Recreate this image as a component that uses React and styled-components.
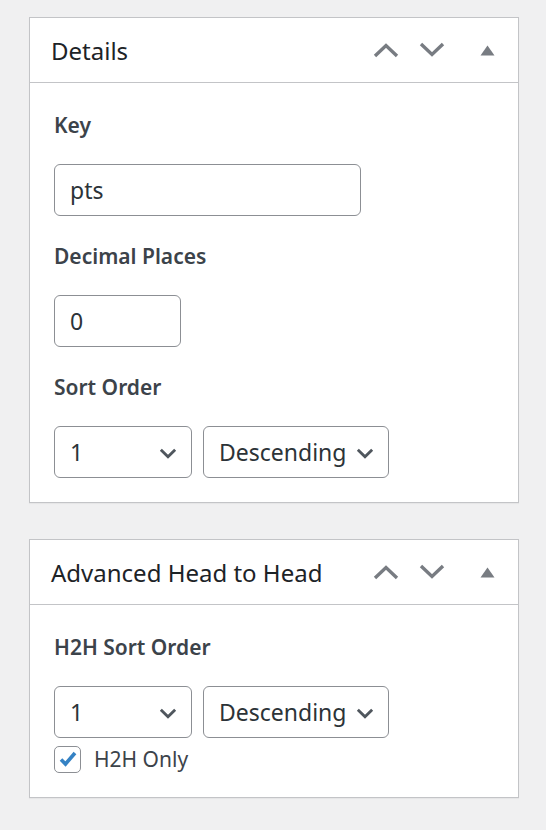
import React, { useState } from "react";
import styled, { createGlobalStyle } from "styled-components";

const GlobalStyle = createGlobalStyle`
  html, body {
    margin: 0;
    background: #f0f0f1;
  }
  body {
    font-family: "Noto Sans", "Open Sans", sans-serif;
    color: #3c434a;
  }
`;

const chevron = encodeURIComponent(
  '<svg xmlns="http://www.w3.org/2000/svg" width="20" height="20" viewBox="0 0 20 20"><path d="M3.5 7l6.5 6.5 6.5-6.5" fill="none" stroke="#50575e" stroke-width="2.6"/></svg>'
);

const Page = styled.main`
  display: flex;
  flex-direction: column;
  gap: 36px;
  padding: 17px 27px 30px 29px;
`;

const Box = styled.section`
  background: #fff;
  border: 1px solid #c3c4c7;
  box-shadow: 0 1px 1px rgba(0, 0, 0, 0.04);
`;

const Header = styled.header`
  display: flex;
  align-items: center;
  height: 64px;
  padding: 0 9px 0 21px;
  border-bottom: 1px solid #c3c4c7;
`;

const Title = styled.h2`
  flex: 1;
  margin: 0;
  font-size: 24px;
  font-weight: 400;
  color: #1d2327;
  line-height: 1.3;
  padding-top: 1px;
`;

const Action = styled.button`
  display: flex;
  align-items: center;
  justify-content: center;
  width: 44px;
  height: 44px;
  padding: 0;
  border: 0;
  background: none;
  color: #787c82;
  cursor: pointer;
  margin-left: ${({ $gap }) => $gap || 0}px;
`;

const Body = styled.div`
  display: flex;
  flex-direction: column;
  align-items: flex-start;
  padding: 27px 24px 24px 24px;
`;

const Label = styled.label`
  font-size: 21px;
  font-weight: 600;
  line-height: 30px;
  color: #3c434a;
  margin-top: ${({ $first }) => ($first ? 0 : 25)}px;
  margin-bottom: 24px;
`;

const TextInput = styled.input`
  box-sizing: border-box;
  width: ${({ $width }) => $width}px;
  height: 52px;
  padding: 0 15px;
  border: 1px solid #8c8f94;
  border-radius: 6px;
  background: #fff;
  font-family: inherit;
  font-size: 23px;
  color: #2c3338;
  outline: none;
`;

const SelectRow = styled.div`
  display: flex;
  gap: 11px;
`;

const Select = styled.select`
  box-sizing: border-box;
  width: ${({ $width }) => $width}px;
  height: 52px;
  padding: 0 40px 0 15px;
  border: 1px solid #8c8f94;
  border-radius: 6px;
  font-family: inherit;
  font-size: 23px;
  color: #2c3338;
  appearance: none;
  background: #fff url("data:image/svg+xml,${chevron}") no-repeat right 12px top 55%;
  background-size: 22px 22px;
  outline: none;
`;

const CheckRow = styled.label`
  display: flex;
  align-items: center;
  gap: 13px;
  margin-top: 7px;
  font-size: 21px;
  line-height: 28px;
  color: #3c434a;
  cursor: pointer;
`;

const Check = styled.span`
  box-sizing: border-box;
  display: flex;
  align-items: center;
  justify-content: center;
  width: 27px;
  height: 27px;
  border: 1px solid #8c8f94;
  border-radius: 5px;
  background: #fff;
`;

const HiddenBox = styled.input`
  display: none;
`;

const UpIcon = () => (
  <svg width="26" height="16" viewBox="0 0 26 16">
    <path d="M2 14L13 3.5 24 14" fill="none" stroke="currentColor" strokeWidth="3.4" />
  </svg>
);

const DownIcon = () => (
  <svg width="26" height="16" viewBox="0 0 26 16">
    <path d="M2 2l11 10.5L24 2" fill="none" stroke="currentColor" strokeWidth="3.4" />
  </svg>
);

const ToggleIcon = () => (
  <svg width="15" height="11" viewBox="0 0 15 11">
    <path d="M7.5 0.5L14.5 10.5H0.5z" fill="currentColor" />
  </svg>
);

const BoxHeader = ({ title }) => (
  <Header>
    <Title>{title}</Title>
    <Action aria-label="Move up">
      <UpIcon />
    </Action>
    <Action aria-label="Move down" $gap={2}>
      <DownIcon />
    </Action>
    <Action aria-label="Toggle panel" $gap={11}>
      <ToggleIcon />
    </Action>
  </Header>
);

const SortSelects = () => (
  <SelectRow>
    <Select $width={138} defaultValue="1">
      <option>1</option>
      <option>2</option>
      <option>3</option>
    </Select>
    <Select $width={186} defaultValue="Descending">
      <option>Descending</option>
      <option>Ascending</option>
    </Select>
  </SelectRow>
);

const App = () => {
  const [h2hOnly, setH2hOnly] = useState(true);

  return (
    <>
      <GlobalStyle />
      <Page>
        <Box>
          <BoxHeader title="Details" />
          <Body>
            <Label $first htmlFor="key">Key</Label>
            <TextInput id="key" $width={307} defaultValue="pts" />
            <Label htmlFor="decimals">Decimal Places</Label>
            <TextInput id="decimals" $width={127} defaultValue="0" />
            <Label>Sort Order</Label>
            <SortSelects />
          </Body>
        </Box>
        <Box>
          <BoxHeader title="Advanced Head to Head" />
          <Body>
            <Label $first>H2H Sort Order</Label>
            <SortSelects />
            <CheckRow>
              <HiddenBox
                type="checkbox"
                checked={h2hOnly}
                onChange={e => setH2hOnly(e.target.checked)}
              />
              <Check>
                {h2hOnly && (
                  <svg width="22" height="22" viewBox="0 0 22 22">
                    <path d="M4 11.5l4.5 4.5L18 5" fill="none" stroke="#3582c4" strokeWidth="3.6" />
                  </svg>
                )}
              </Check>
              H2H Only
            </CheckRow>
          </Body>
        </Box>
      </Page>
    </>
  );
};

export default App;
